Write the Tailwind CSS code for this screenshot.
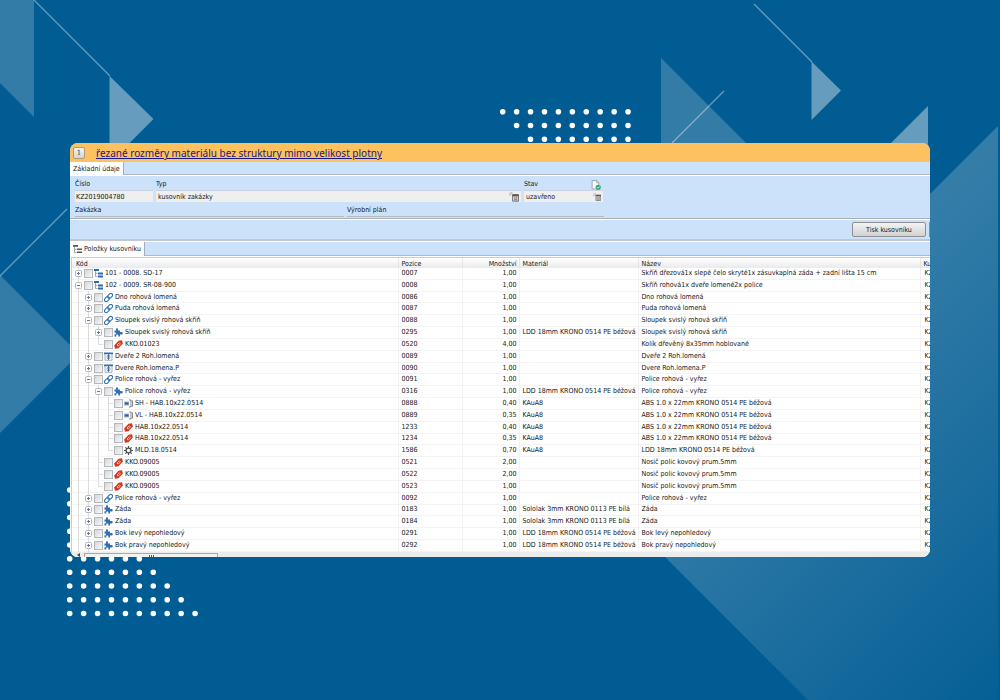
<!DOCTYPE html>
<html lang="cs">
<head>
<meta charset="utf-8">
<meta name="viewport" content="width=device-width, initial-scale=1">
<title>Kusovník zakázky</title>
<script src="https://cdn.jsdelivr.net/npm/@tailwindcss/browser@4"></script>
</head>
<body class="relative min-h-screen overflow-hidden bg-[#005c93] font-['DejaVu_Sans_Condensed','Noto_Sans',sans-serif] text-[7px] text-[#161616]">

<!-- Decorative backdrop -->
<svg class="absolute inset-0 h-full w-full" viewBox="0 0 1000 700" preserveAspectRatio="xMidYMid slice" aria-hidden="true">
  <defs>
    <linearGradient id="fade" gradientUnits="userSpaceOnUse" x1="575" y1="575" x2="850" y2="850">
      <stop offset="0" stop-color="#fff" stop-opacity=".2"/><stop offset="1" stop-color="#fff" stop-opacity=".02"/>
    </linearGradient>
  </defs>
  <g fill="#fff">
    <path fill-opacity=".2" d="M0 0H34V117L0 83Z"/>
    <path fill-opacity=".4" d="M109.500 76L153.500 119L109.500 163Z"/>
    <path fill-opacity=".2" d="M0 275L79 354L0 433Z"/>
    <path fill-opacity=".2" d="M661 58L761 158H661Z"/>
    <path fill-opacity=".4" d="M811.500 61.500L841 90.500L811.500 120Z"/>
    <path fill-opacity=".4" d="M928 106V158H876Z"/>
    <path fill="url(#fade)" d="M998 126V700H808L616 508Z"/>
  </g>
  <g fill="none" stroke="#fff" stroke-opacity=".4" stroke-width="1.300">
    <path d="M34 0L110 76M0 276L67 209M672 143L724 91M754 4L812 62"/>
  </g>
  <g fill="none" stroke="#fff" stroke-width="5.600" stroke-linecap="round" stroke-dasharray="0 13.930">
    <path d="M502.700 111.800H628.500M516.600 125.500H628.500M530.500 139.200H628.500"/>
    <path d="M69.700 490h1M69.700 503.800h1M69.700 517.500h1M69.700 531.200h1M69.700 545h1"/>
    <path d="M69.700 558.700h70M69.700 572.300h84M69.700 586h98M69.700 599.700h112M69.700 613.500h126"/>
  </g>
</svg>

<!-- Icon library -->
<svg class="hidden" aria-hidden="true">
  <symbol id="i-tree" viewBox="0 0 18 18"><path fill="#2b6cb0" d="M0 0h10v4H0zM8 7h10v4H8zM8 13h10v4H8z"/><path stroke="#888" stroke-width="1.500" fill="none" d="M3 4v11h4M3 8.500h4"/></symbol>
  <symbol id="i-treeg" viewBox="0 0 18 18"><path fill="#555" d="M0 0h10v3.500H0zM8 7h10v3H8zM8 13h10v3H8z"/><path stroke="#888" stroke-width="1.500" fill="none" d="M3 4v11h4M3 8.500h4"/></symbol>
  <symbol id="i-link" viewBox="0 0 18 18"><g fill="none" stroke="#2d6fb5" stroke-width="2.200" transform="rotate(-45 9 9)"><rect x="-1" y="5.500" width="11" height="7" rx="3.500"/><rect x="8" y="5.500" width="11" height="7" rx="3.500"/></g></symbol>
  <symbol id="i-puzzle" viewBox="0 0 18 18"><path fill="#2f6fb3" d="M1 5h3.500C3 2 4 .5 6 .5S9 2 7.700 5H12v3.700C15 7.200 17.500 8 17.500 10.500S15 13.700 12 12.300V17H8.500C9.500 14 8.500 13 6.500 13S4 14 4.700 17H1v-4.500c2 .7 3-.2 3-1.700S3 8.500 1 9.300Z"/></symbol>
  <symbol id="i-tag" viewBox="0 0 18 18"><path fill="#d2371f" d="M9 1.500 16 .5 17.800 7 9 16.500 2 17.500 .3 11Z"/><path fill="none" stroke="#fff" stroke-width="1.300" d="M6 10l4.500-4.500 2.300 2.300L8.300 12.300Z"/></symbol>
  <symbol id="i-door" viewBox="0 0 18 18"><path fill="#2d6fb5" d="M0 1h18v3.500H0z"/><path fill="none" stroke="#8794a3" stroke-width="1.500" d="M2 4v12.500h14V4"/><path fill="none" stroke="#2b5f99" stroke-width="1.700" d="M9 5v10M5 10h8M7 12.500l2 2.500 2-2.500M7 7.500 9 5l2 2.500"/></symbol>
  <symbol id="i-edge" viewBox="0 0 18 18"><path fill="#9db4cc" d="M0 5h10v8H0z"/><path fill="#2b5f99" d="M2 7h7v4H2z"/><path fill="none" stroke="#666" stroke-width="1.500" d="M10 2h4v14h-4M15 3.500h2v11h-2"/></symbol>
  <symbol id="i-gear" viewBox="0 0 18 18"><circle cx="9" cy="9" r="4.800" fill="none" stroke="#4c4c4c" stroke-width="2.600"/><path stroke="#4c4c4c" stroke-width="2.400" d="M9 0v4M9 14v4M0 9h4M14 9h4M2.700 2.700l2.600 2.600M12.700 12.700l2.600 2.600M15.300 2.700l-2.600 2.600M5.300 12.700l-2.600 2.600"/></symbol>
  <symbol id="i-pick" viewBox="0 0 18 18"><path fill="#ddd" stroke="#555" stroke-width="1.400" d="M6.500 5.500H17V16.500H6.500z"/><path fill="#555" d="M6 4h11.500v3.500H6z"/><path stroke="#777" d="M9 10.500h6M9 13.500h6M10.500 8v8M13.500 8v8M1 1l3 3M5 0v3.500M0 5.500h3.500" fill="none"/></symbol>
  <symbol id="i-doc" viewBox="0 0 18 18"><path fill="#f6fafd" stroke="#7d8a96" stroke-width="1.200" d="M2 1h8l4 4v11H2z"/><path fill="none" stroke="#7d8a96" d="M10 1v4h4"/><circle cx="13" cy="13" r="4.600" fill="#35a46b"/><path fill="none" stroke="#fff" stroke-width="1.500" d="M10.800 13l1.700 1.800 3-3.300"/></symbol>
</svg>

<div class="relative flex min-h-screen flex-col px-[70px] py-[143px]">
  <main class="flex grow flex-col overflow-hidden rounded-lg bg-[#cce2fb]">

    <header class="flex h-[19px] items-center gap-[11px] bg-[#fdc160] pl-[3px] pt-px">
      <button class="h-3 w-3 rounded-[2px] border border-[#b39a76] bg-linear-to-b from-[#f4f4f4] to-[#d4d4d4] font-['DejaVu_Serif',serif] text-[7px] leading-[9px] text-[#444]" aria-label="Informace">1</button>
      <a href="#" class="font-['Noto_Sans',sans-serif] text-[10px] leading-4 text-[#191980] underline">řezané rozměry materiálu bez struktury mimo velikost plotny</a>
    </header>

    <nav class="flex h-[13px] border-b border-[#b3b9c0]">
      <button class="-mb-px border-r border-[#a5adb5] bg-white px-[3px] leading-3">Základní údaje</button>
    </nav>

    <section class="border-b border-[#abb0b6] border-t border-t-white">
      <form class="grid grid-cols-[78px_365px_79px] gap-x-[3px] pt-[3px] pl-[5px]">
        <label for="cislo" class="leading-[11px]">Číslo</label>
        <label for="typ" class="leading-[11px]">Typ</label>
        <div class="flex items-center justify-between"><label for="stav" class="leading-[11px]">Stav</label><svg class="mr-[2px] h-[10px] w-[10px]"><use href="#i-doc"/></svg></div>
        <input id="cislo" value="KZ2019004780" readonly class="h-3 w-full border-t border-[#c9d3de] bg-[#efefef] px-px">
        <div class="flex h-3 items-center border-t border-[#c9d3de] bg-[#efefef] pr-[2px]"><input id="typ" value="kusovník zakázky" readonly class="h-[11px] min-w-0 grow px-[2px]"><svg class="h-[10px] w-[10px]"><use href="#i-pick"/></svg></div>
        <div class="flex h-3 items-center border-t border-[#c9d3de] bg-[#efefef] pr-[2px]"><input id="stav" value="uzavřeno" readonly class="h-[11px] min-w-0 grow px-[2px]"><svg class="h-[10px] w-[10px]"><use href="#i-pick"/></svg></div>
      </form>
      <div class="grid grid-cols-[269px_257px] gap-x-[3px] pt-[3px] pb-px pl-[5px]">
        <span class="border-b border-[#b4bac1] leading-[11px]">Zakázka</span>
        <span class="border-b border-[#b4bac1] leading-[11px]">Výrobní plán</span>
      </div>
    </section>

    <div class="flex h-[22px] items-center justify-end gap-[3px] overflow-hidden border-b-2 border-[#c3c8ce] border-t border-t-white">
      <button class="h-[15px] w-[74px] rounded-[2px] border border-[#8f8f8f] bg-linear-to-b from-[#f3f3f3] to-[#d2d2d2] leading-3">Tisk kusovníku</button>
      <span class="h-[15px] w-px bg-[#8f8f8f]"></span>
    </div>

    <nav class="flex h-[15px] border-b border-[#b3b9c0] border-t border-t-white">
      <button class="-mb-px flex items-center gap-[2px] border-r border-[#a5adb5] bg-white px-[3px] leading-3"><svg class="h-[9px] w-[9px]"><use href="#i-treeg"/></svg>Položky kusovníku</button>
    </nav>

    <div class="flex grow flex-col border-t border-white bg-white pl-px">
      <div class="flex grow flex-col border-t border-l border-[#c9ccd4]">
        <table class="w-full grow table-fixed border-collapse whitespace-nowrap">
          <colgroup><col class="w-[326px]"><col class="w-[64px]"><col class="w-[57px]"><col class="w-[119px]"><col><col class="w-[10px]"></colgroup>
          <thead class="bg-linear-to-b from-white to-[#e9eaec]">
            <tr class="h-[10px] text-left leading-[7px]">
              <th class="border-r border-[#e4e4e4] p-0 pt-[2px] pl-1 font-normal">Kód</th>
              <th class="border-r border-[#e4e4e4] p-0 pt-[2px] pl-[3px] font-normal">Pozice</th>
              <th class="border-r border-[#e4e4e4] p-0 pt-[2px] pr-[2px] text-right font-normal">Množství</th>
              <th class="border-r border-[#e4e4e4] p-0 pt-[2px] pl-[3px] font-normal">Materiál</th>
              <th class="border-r border-[#e4e4e4] p-0 pt-[2px] pl-[3px] font-normal">Název</th>
              <th class="overflow-hidden p-0 pt-[2px] pl-[3px] font-normal">Kusovník</th>
            </tr>
          </thead>
          <tbody id="rows"></tbody>
        </table>
        <div class="flex h-[5px] shrink-0 items-end bg-[#ececec] pl-[5px]" aria-hidden="true">
          <span class="h-0 w-0 border-y-2 border-r-3 border-y-transparent border-r-[#444]"></span>
          <span class="ml-1 flex h-[4px] w-[134px] items-end justify-center gap-px rounded-t-[1px] border border-b-0 border-[#a9a9a9] bg-[#f3f3f3]"><i class="h-[2px] w-px bg-[#555]"></i><i class="h-[2px] w-px bg-[#555]"></i><i class="h-[2px] w-px bg-[#555]"></i></span>
        </div>
      </div>
    </div>
  </main>
</div>

<script>
const L = 'LDD 18mm KRONO 0514 PE béžová', A = 'ABS 1.0 x 22mm KRONO 0514 PE béžová', S = 'Sololak 3mm KRONO 0113 PE bílá', N = 'Nosič polic kovový prum.5mm';
// One character per tree level: | line, + collapsed, - expanded, T branch, L last branch
const data = [
  ['+', 'tree', '101 - 0008. SD-17', '0007', '1,00', '', 'Skříň dřezová1x slepé čelo skryté1x zásuvkaplná záda + zadní lišta 15 cm'],
  ['-', 'tree', '102 - 0009. SR-08-900', '0008', '1,00', '', 'Skříň rohová1x dveře lomené2x police'],
  ['|+', 'link', 'Dno rohová lomená', '0086', '1,00', '', 'Dno rohová lomená'],
  ['|+', 'link', 'Puda rohová lomená', '0087', '1,00', '', 'Puda rohová lomená'],
  ['|-', 'link', 'Sloupek svislý rohová skříň', '0088', '1,00', '', 'Sloupek svislý rohová skříň'],
  ['||+', 'puzzle', 'Sloupek svislý rohová skříň', '0295', '1,00', L, 'Sloupek svislý rohová skříň'],
  ['||L', 'tag', 'KKO.01023', '0520', '4,00', '', 'Kolík dřevěný 8x35mm hoblované'],
  ['|+', 'door', 'Dveře 2 Roh.lomená', '0089', '1,00', '', 'Dveře 2 Roh.lomená'],
  ['|+', 'door', 'Dvere Roh.lomena.P', '0090', '1,00', '', 'Dvere Roh.lomena.P'],
  ['|-', 'link', 'Police rohová - vyřez', '0091', '1,00', '', 'Police rohová - vyřez'],
  ['||-', 'puzzle', 'Police rohová - vyřez', '0316', '1,00', L, 'Police rohová - vyřez'],
  ['|||T', 'edge', 'SH - HAB.10x22.0514', '0888', '0,40', 'KAuA8', A],
  ['|||T', 'edge', 'VL - HAB.10x22.0514', '0889', '0,35', 'KAuA8', A],
  ['|||T', 'tag', 'HAB.10x22.0514', '1233', '0,40', 'KAuA8', A],
  ['|||T', 'tag', 'HAB.10x22.0514', '1234', '0,35', 'KAuA8', A],
  ['|||L', 'gear', 'MLD.18.0514', '1586', '0,70', 'KAuA8', L],
  ['||T', 'tag', 'KKO.09005', '0521', '2,00', '', N],
  ['||T', 'tag', 'KKO.09005', '0522', '2,00', '', N],
  ['||L', 'tag', 'KKO.09005', '0523', '1,00', '', N],
  ['|+', 'link', 'Police rohová - vyřez', '0092', '1,00', '', 'Police rohová - vyřez'],
  ['|+', 'puzzle', 'Záda', '0183', '1,00', S, 'Záda'],
  ['|+', 'puzzle', 'Záda', '0184', '1,00', S, 'Záda'],
  ['|+', 'puzzle', 'Bok levý nepohledový', '0291', '1,00', L, 'Bok levý nepohledový'],
  ['|+', 'puzzle', 'Bok pravý nepohledový', '0292', '1,00', L, 'Bok pravý nepohledový']
];
const box = '<rect x="2.5" y="2.5" width="6" height="6" rx="1" fill="#fff" stroke="#b4b7bc"/>';
const shapes = {
  '|': '<path d="M5.5-1V12" stroke="#dcdcdc"/>',
  'T': '<path d="M5.5-1V12M5.5 5.5H10" stroke="#dcdcdc"/>',
  'L': '<path d="M5.5-1V5.500H10" stroke="#dcdcdc"/>',
  '+': '<path d="M5.5-1V12" stroke="#dcdcdc"/>' + box + '<path d="M4 5.500H7M5.500 4V7" stroke="#6a76a0"/>',
  '-': '<path d="M5.5-1V12" stroke="#dcdcdc"/>' + box + '<path d="M4 5.500H7" stroke="#6a76a0"/>'
};
document.getElementById('rows').innerHTML = data.map(([tree, icon, code, pos, qty, mat, name]) => `
<tr class="border-b border-[#f3f3f3] leading-[9px]">
  <td class="border-r border-[#f1f1f1] p-0"><div class="flex h-[10px] items-center pl-px">
    ${[...tree].map(c => `<svg class="h-[11px] w-[10px] shrink-0 overflow-visible" fill="none">${shapes[c]}</svg>`).join('')}
    <input type="checkbox" aria-label="${code}" class="ml-px h-[9px] w-[9px] shrink-0 appearance-none border border-[#b5b8bb] bg-linear-to-br from-[#d5d7da] to-[#f8f8f8]">
    <svg class="ml-px h-[9px] w-[9px] shrink-0"><use href="#i-${icon}"/></svg>
    <span class="pl-[2px]">${code}</span></div></td>
  <td class="border-r border-[#f1f1f1] p-0 pl-[3px]">${pos}</td>
  <td class="border-r border-[#f1f1f1] p-0 pr-[2px] text-right">${qty}</td>
  <td class="border-r border-[#f1f1f1] p-0 pl-[3px]">${mat}</td>
  <td class="border-r border-[#f1f1f1] p-0 pl-[3px]">${name}</td>
  <td class="overflow-hidden p-0 pl-1">KZ2019004780</td>
</tr>`).join('');
</script>
</body>
</html>
